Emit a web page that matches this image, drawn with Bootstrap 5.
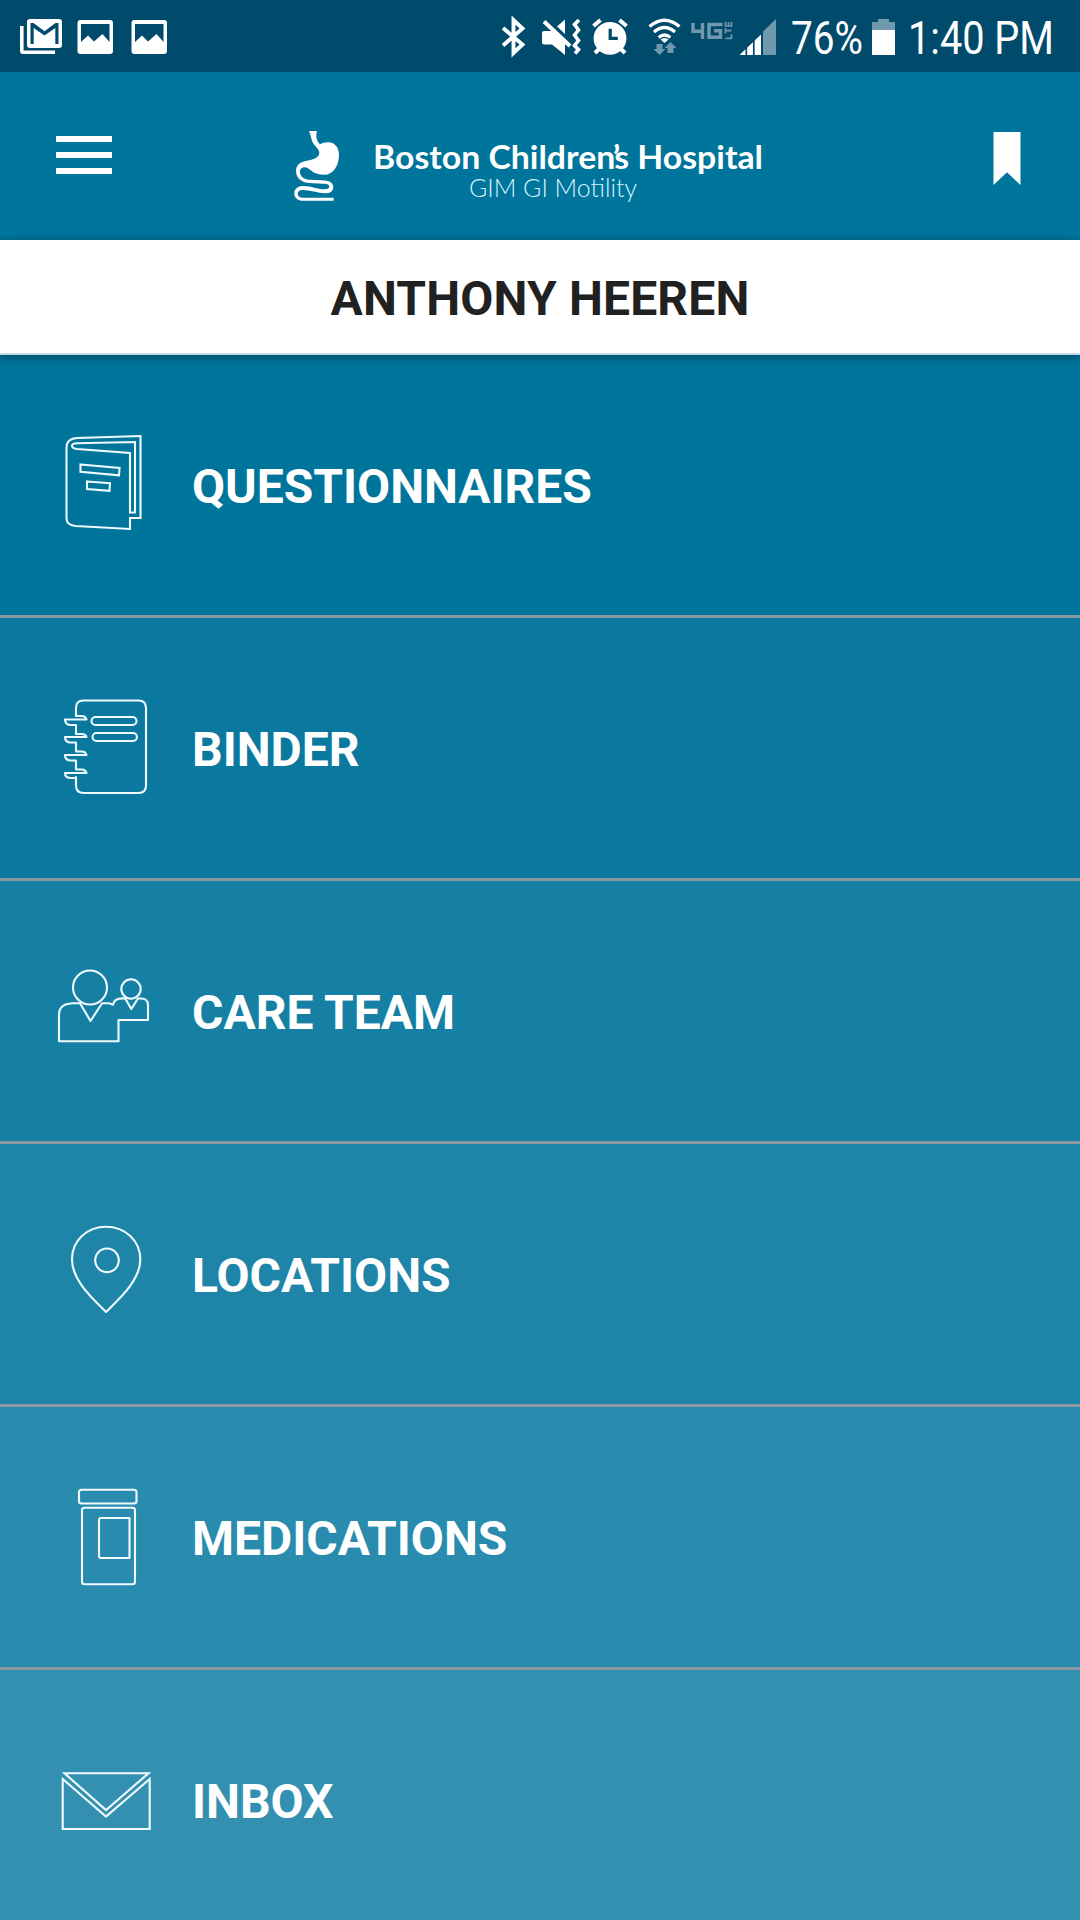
<!DOCTYPE html>
<html lang="en">
<head>
<meta charset="utf-8">
<meta name="viewport" content="width=device-width, initial-scale=1">
<title>Boston Children's Hospital – GIM GI Motility</title>
<link href="https://cdn.jsdelivr.net/npm/bootstrap@5.3.0/dist/css/bootstrap.min.css" rel="stylesheet">
<style>
  body { font-family: Roboto, "Noto Sans", sans-serif; background: #3490b2; overflow: hidden; }
  .screen { width: 1080px; height: 1920px; }
  .status-bar { height: 72px; background: #004a6c; }
  .app-header { height: 168px; background: #00759c; padding: 0 57px 0 56px; }
  .name-bar { height: 115px; color: #212121; font-size: 48px; line-height: 48px; letter-spacing: .18px; border-bottom: 2px solid #c3dbe4; box-shadow: 0 2px 9px rgba(0,0,0,.42); padding-top: 5px; }
  .menu-row.list-group-item { height: 263px; border: 0; border-bottom: 3px solid #8b989f; color: #fff; font-size: 48px; line-height: 48px; padding: 0 0 0 40px; border-radius: 0; }
  .menu-row svg { width: 152px; height: 260px; flex: none; }
  .menu-row span { padding-top: 4px; }
  .tone-1 { background: #00759c; }
  .tone-2 { background: #0b799f; }
  .tone-3 { background: #157fa4; }
  .tone-4 { background: #1f85a8; }
  .tone-5 { background: #298bad; }
  .tone-6 { background: #3490b1; }
  .outline { fill: none; stroke: #effbff; stroke-width: 2.1; stroke-linejoin: round; stroke-linecap: round; }
  .sharp { stroke-linejoin: miter; }
  .dim { fill: #7199ad; }
  .brand-title { font: 700 33px Lato, sans-serif; }
  .brand-sub { font: 300 25px Lato, sans-serif; fill: #d5f3fc; }
  .clock { font: 400 46px Roboto, sans-serif; }
  svg { display: block; }
</style>
</head>
<body>
<div class="screen d-flex flex-column overflow-hidden">

  <div class="status-bar d-flex flex-shrink-0">
    <svg width="70" height="72" viewBox="0 0 70 72" fill="#fff">
      <path d="M20 26h3.600v24.600H55V54H23q-3 0-3-3z"/>
      <path fill-rule="evenodd" d="M30 19h29q3 0 3 3v23q0 3-3 3H30q-3 0-3-3V22q0-3 3-3zM30.500 23v21h3.200V28l10.800 7.500L55.300 28v16h3.200V23h-3l-11 8.300L33.500 23z"/>
    </svg>
    <svg width="52" height="72" viewBox="70 0 52 72"><path fill="#fff" fill-rule="evenodd" d="M80.500 20H110q3 0 3 3v28q0 3-3 3H80.500q-3 0-3-3V23q0-3 3-3zM81 24v18l7-6.500 6 6 8.500-7.500 7 8V24z"/></svg>
    <svg class="ms-1" width="50" height="72" viewBox="72 0 50 72"><path fill="#fff" fill-rule="evenodd" d="M80.500 20H110q3 0 3 3v28q0 3-3 3H80.500q-3 0-3-3V23q0-3 3-3zM81 24v18l7-6.500 6 6 8.500-7.500 7 8V24z"/></svg>

    <svg class="ms-auto" width="44" height="72" viewBox="490 0 44 72"><path d="M503 28l19.500 16.500-9 8.500V20l9 8.500L503 45.500" fill="none" stroke="#fff" stroke-width="3.900"/></svg>
    <svg width="52" height="72" viewBox="534 0 52 72"><path fill="#fff" d="M544 31h9l12 11v13l-13-10.500h-8q-2 0-2-2v-9.500q0-2 2-2zM565 19.500v14.500l-8-7.500z"/><path d="M544 21.500l26 24.500" stroke="#fff" stroke-width="4"/><path d="M579 20l-4.500 4.500 4 5.500-4 5 4 5.500-4 5 4 4-3.500 4" fill="none" stroke="#fff" stroke-width="3.600"/></svg>
    <svg width="50" height="72" viewBox="586 0 50 72"><g stroke="#fff" stroke-width="4"><path d="M593.500 26l7-6M626.500 26l-7-6M600 48l-5 5M620 48l5 5"/></g><circle cx="610" cy="38.300" r="16.400" fill="#fff"/><path d="M610.200 28.700V38.300h7.600" fill="none" stroke="#004a6c" stroke-width="3.200"/></svg>
    <svg width="50" height="72" viewBox="636 0 50 72"><g fill="none" stroke="#fff" stroke-width="3.200"><path d="M649.500 26.500q15-12.500 30 0M654 32q10.500-9 21 0M658.700 37.500q5.800-5 11.600 0"/></g><path fill="#fff" d="M660.500 39.500q4-3 8 0l-4 3.500z"/><path class="dim" d="M656.500 44h6v5h3l-6 6-6-6h3zM667.500 53v-5h-3l6-6 6 6h-3v5z"/></svg>
    <svg width="50" height="72" viewBox="686 0 50 72"><g fill="none" stroke="#7199ad" stroke-width="3.400"><path d="M693 23v8.300h11M702.500 23v16M722.500 24.500H709v12.800h11.500v-6.500H714"/></g><g fill="none" stroke="#7199ad" stroke-width="1.700"><path d="M725.500 38.300h6v-4M725.500 30.700h6M725.500 28v5.500M725.500 22v4h6v-4M728.500 22v4"/></g></svg>
    <svg width="48" height="72" viewBox="736 0 48 72"><path class="dim" d="M763 31.500L776 19v36h-13z"/><path fill="#fff" d="M739.500 55L761 34.500V55z"/><path d="M753.800 39v16M746.300 45v10" stroke="#004a6c" stroke-width="1.700"/></svg>
    <svg width="296" height="72" viewBox="784 0 296 72">
      <text class="clock" fill="#fff" x="791" y="54.300" textLength="72" lengthAdjust="spacingAndGlyphs">76%</text>
      <path class="dim" d="M872 22h6v-3h11v3h6v8h-23z"/><path fill="#fff" d="M872 30h23v25h-23z"/>
      <text class="clock" fill="#fff" x="908" y="54.300" textLength="146" lengthAdjust="spacingAndGlyphs">1:40 PM</text>
    </svg>
  </div>

  <header class="app-header d-flex justify-content-between flex-shrink-0">
    <svg width="56" height="168" viewBox="56 72 56 168" fill="#fff" role="img" aria-label="Menu"><path d="M56 136h56v6H56zM56 152h56v6H56zM56 168h56v6H56z"/></svg>
    <svg width="529" height="168" viewBox="288 72 529 168" fill="#fff">
      <path d="M309 131H317C315.500 136 316.500 141 320 144.300C322 143 325 142.300 328.500 142.300C335 142.300 339 148 339 155C339 166 333 174.800 324 174.800C319 174.800 315 173.500 311.700 171C308.500 168.300 306 166.700 303.500 167.300C300.500 168 299 171.500 300.500 174.500C302 178 305 179.500 309 179.800L322 180.200C329 180.500 333.300 182.500 333.300 187C333.300 191.500 329.500 193.500 325 193.300C318 193 309 190 303.500 190C299.500 190 297.700 191.500 297.700 193.700C297.700 196.500 300 197.700 304 197.700H333.700V200.800H303C298 200.800 294.300 198 294.300 193.500C294.300 188.500 298 186 303.500 186C311 186 318 189.300 324 189.300C327.500 189.300 329.300 188.500 329.300 186.800C329.300 184.500 327 183.700 323 183.700L309 183C301.500 182.500 296 178 296 171C296 164.500 300.500 162 307 160.700C313 159.500 319.300 158 319.300 152.500C319.300 149 314 145.500 312.500 142C311.300 139 310.500 134.500 309 131z"/>
      <text class="brand-title" x="373" y="169" textLength="390" lengthAdjust="spacingAndGlyphs" dx="0 0 0 0 0 0 0 0 0 0 0 0 0 0 0 -2 -5">Boston Children’s Hospital</text>
      <text class="brand-sub" x="469" y="197" textLength="168" lengthAdjust="spacingAndGlyphs">GIM GI Motility</text>
    </svg>
    <svg width="30" height="168" viewBox="993 72 30 168" fill="#fff" role="img" aria-label="Bookmark"><path d="M993.500 132h27v53L1007 172.300 993.500 185z"/></svg>
  </header>

  <div class="name-bar bg-white d-flex flex-shrink-0 align-items-center justify-content-center fw-bold position-relative z-1">ANTHONY HEEREN</div>

  <nav class="list-group rounded-0 flex-shrink-0">
    <a class="list-group-item menu-row tone-1 d-flex align-items-center fw-bold">
      <svg class="outline sharp" viewBox="40 355 152 260"><path d="M140.500 436l-63 2q-11 .5-11 9.500v71q0 6.500 9 7.500l54.500 3v-11h10.500zM130 512v-59l-53-4q-5-.7-5-3.300 0-2.200 5-2.500l58-1.200v70.500h-5zM80.500 464.500l39 3.500-.5 7.300-38.500-3.500zM87 481.500l23 1.800-.5 7.500-22.500-1.800z"/></svg>
      <span>QUESTIONNAIRES</span>
    </a>
    <a class="list-group-item menu-row tone-2 d-flex align-items-center fw-bold">
      <svg class="outline" viewBox="40 618 152 260"><path d="M76 716v-8q0-7.500 7.500-7.500h55q7.500 0 7.500 7.500v77.500q0 7.500-7.500 7.500h-55q-7.500 0-7.500-7.500V777"/>
      <path d="M86.500 719.500H65q0 5.500 6 5.500h5V734M76 716h5.500q4 0 5 3.500"/>
      <path d="M86.500 737H65q0 5.500 6 5.500h5v9M76 734h5.500q4 0 5 3M86.500 755H65q0 5.500 6 5.500h5v9M76 751.500h5.500q4 0 5 3.500M86.500 773H65q0 5 6 5h5M76 769.500h5.500q4 0 5 3.500"/>
      <rect x="91.500" y="717" width="45" height="8" rx="4"/><rect x="92.500" y="733" width="44.500" height="8" rx="4"/></svg>
      <span>BINDER</span>
    </a>
    <a class="list-group-item menu-row tone-3 d-flex align-items-center fw-bold">
      <svg class="outline" viewBox="40 881 152 260"><circle cx="90" cy="987.500" r="17"/><circle cx="131" cy="989" r="9.700"/><path d="M80 1003.300h-6q-15 0-15 11.500v26.500h59.500V1020H148v-15q0-6.500-7-6.500h-3l-6.700 10.500-6-10.500q-11-1-12.300 6.200-3-1.400-6-1.400h-5L90.500 1021 80 1003.300"/></svg>
      <span>CARE TEAM</span>
    </a>
    <a class="list-group-item menu-row tone-4 d-flex align-items-center fw-bold">
      <svg class="outline" viewBox="40 1144 152 260"><circle cx="107" cy="1260.300" r="11.800"/><path d="M106 1312c-14-14-34-32-34-52.500 0-19 15-32.800 34-32.800s34.300 13.800 34.300 32.800c0 20.500-20.300 38.500-34.300 52.500z"/></svg>
      <span>LOCATIONS</span>
    </a>
    <a class="list-group-item menu-row tone-5 d-flex align-items-center fw-bold">
      <svg class="outline" viewBox="40 1407 152 260"><rect x="79" y="1489.700" width="57.500" height="13.800" rx="2.500"/><rect x="82" y="1507.700" width="53" height="76.500" rx="2.500"/><path d="M129.500 1518H101q-2 0-2 2v36q0 2 2 2h28.500z"/></svg>
      <span>MEDICATIONS</span>
    </a>
    <a class="list-group-item menu-row tone-6 d-flex align-items-center fw-bold">
      <svg class="outline sharp" viewBox="40 1670 152 260"><path d="M64.500 1773.300h84L106 1810zM62.700 1779v50h87v-50L106 1816.500z"/></svg>
      <span>INBOX</span>
    </a>
  </nav>
</div>
<script src="https://cdn.jsdelivr.net/npm/bootstrap@5.3.0/dist/js/bootstrap.bundle.min.js"></script>
</body>
</html>
